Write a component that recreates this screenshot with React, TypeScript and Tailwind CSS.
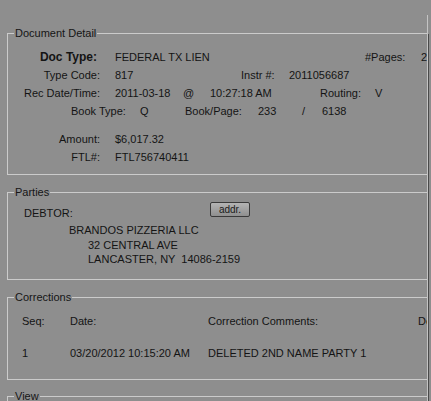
import React from 'react'

const font = { fontFamily: '"Liberation Sans", Arial, sans-serif' }

const Group = ({
  title,
  className,
  children,
}: {
  title: string
  className?: string
  children?: React.ReactNode
}) => {
  return (
    <fieldset className={`ml-[7px] w-[440px] border border-[#cbcbcb] ${className ?? ''}`}>
      <legend className="ml-[6px] px-[1px] text-[11px] leading-[13px] text-[#151515]">{title}</legend>
      {children}
    </fieldset>
  )
}

const Label = ({ children, bold }: { children: React.ReactNode; bold?: boolean }) => (
  <span
    className={`w-[92px] shrink-0 text-right ${bold ? 'pr-[3px] text-[12px] font-bold' : ''}`}
  >
    {children}
  </span>
)

const App = () => {
  return (
    <div
      style={font}
      className="flex h-[401px] w-[431px] overflow-hidden bg-[#8e8e8e] text-[11px] text-[#141414]"
    >
      <div className="w-[427px] shrink-0 overflow-hidden pt-[27px]">
        <Group title="Document Detail" className="pb-[8px]">
          <div className="pt-[8px]">
            <div className="flex h-[18px] items-center whitespace-nowrap">
              <Label bold>Doc Type:</Label>
              <span className="ml-[15px] w-[250px] shrink-0">FEDERAL TX LIEN</span>
              <span className="w-[56px] shrink-0">#Pages:</span>
              <span>2</span>
            </div>
            <div className="flex h-[18px] items-center whitespace-nowrap">
              <Label>Type Code:</Label>
              <span className="ml-[15px] w-[126px] shrink-0">817</span>
              <span className="w-[48px] shrink-0">Instr #:</span>
              <span>2011056687</span>
            </div>
            <div className="flex h-[18px] items-center whitespace-nowrap">
              <Label>Rec Date/Time:</Label>
              <span className="ml-[15px] w-[68px] shrink-0">2011-03-18</span>
              <span className="w-[27px] shrink-0">@</span>
              <span className="w-[110px] shrink-0">10:27:18 AM</span>
              <span className="w-[55px] shrink-0">Routing:</span>
              <span>V</span>
            </div>
            <div className="flex h-[18px] items-center whitespace-nowrap pl-[63px]">
              <span className="w-[69px] shrink-0">Book Type:</span>
              <span className="w-[45px] shrink-0">Q</span>
              <span className="w-[73px] shrink-0">Book/Page:</span>
              <span className="w-[44px] shrink-0">233</span>
              <span className="w-[20px] shrink-0">/</span>
              <span>6138</span>
            </div>
            <div className="mt-[10px] flex h-[18px] items-center whitespace-nowrap">
              <Label>Amount:</Label>
              <span className="ml-[15px]">$6,017.32</span>
            </div>
            <div className="flex h-[18px] items-center whitespace-nowrap">
              <Label>FTL#:</Label>
              <span className="ml-[15px]">FTL756740411</span>
            </div>
          </div>
        </Group>

        <Group title="Parties" className="mt-[11px] pb-[13px]">
          <div className="flex items-start pl-[16px] pt-[3px]">
            <span className="mt-[4px] w-[186px] shrink-0 leading-[14px]">DEBTOR:</span>
            <button className="h-[15px] w-[40px] rounded-[2px] border border-[#3a3a3a] bg-gradient-to-b from-[#b4b4b4] to-[#8f8f8f] text-[10px] leading-[12px] text-[#1a1a1a]">
              addr.
            </button>
          </div>
          <div className="mt-[3px] leading-[14px]">
            <div className="h-[15px] pl-[61px]">BRANDOS PIZZERIA LLC</div>
            <div className="h-[14px] pl-[80px]">32 CENTRAL AVE</div>
            <div className="h-[14px] whitespace-pre pl-[80px]">LANCASTER, NY  14086-2159</div>
          </div>
        </Group>

        <Group title="Corrections" className="mt-[11px] pb-[19px]">
          <div className="pl-[14px] pt-[10px] leading-[14px]">
            <div className="flex whitespace-nowrap">
              <span className="w-[48px] shrink-0">Seq:</span>
              <span className="w-[138px] shrink-0">Date:</span>
              <span className="w-[210px] shrink-0">Correction Comments:</span>
              <span>Deleted By:</span>
            </div>
            <div className="mt-[18px] flex whitespace-nowrap">
              <span className="w-[48px] shrink-0">1</span>
              <span className="w-[138px] shrink-0">03/20/2012 10:15:20 AM</span>
              <span className="w-[210px] shrink-0">DELETED 2ND NAME PARTY 1</span>
            </div>
          </div>
        </Group>

        <Group title="View" className="mt-[10px] h-[60px]" />
      </div>
      <div className="mt-[15px] w-[1px] shrink-0 bg-[#c4c4c4]" />
      <div className="mt-[34px] w-[1px] shrink-0 bg-[#4a4a4a]" />
    </div>
  )
}

export default App
